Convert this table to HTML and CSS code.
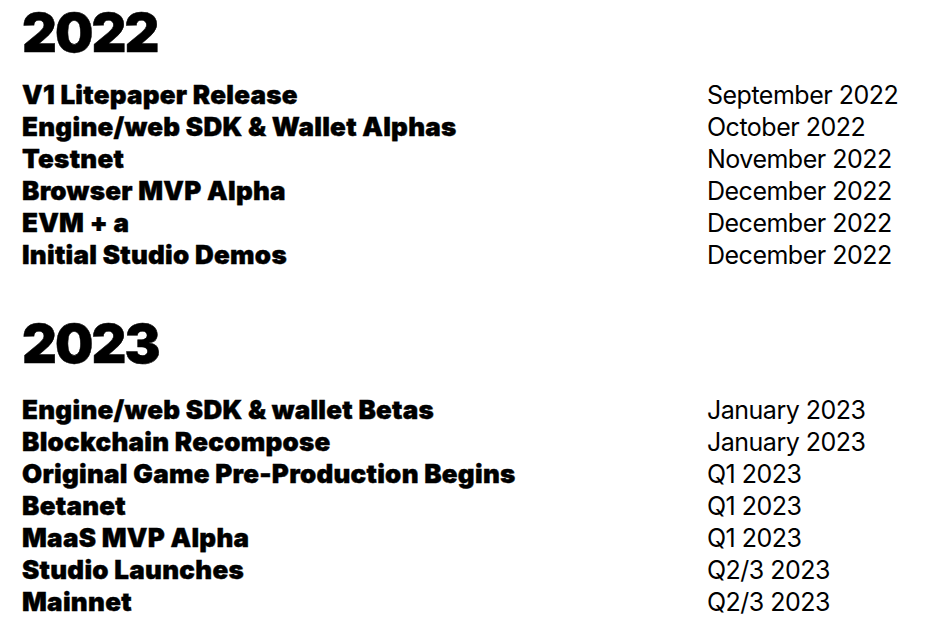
FILE: index.html
```html
<!DOCTYPE html>
<html lang="en">
<head>
<meta charset="utf-8">
<title>Roadmap</title>
<link rel="stylesheet" href="styles.css">
</head>
<body>
<main class="roadmap">
  <section class="year year-2022">
    <h2 class="year-title">2022</h2>
    <div class="rows">
      <div class="item">V1 Litepaper Release</div><div class="date">September 2022</div>
      <div class="item">Engine/web SDK &amp; Wallet Alphas</div><div class="date">October 2022</div>
      <div class="item">Testnet</div><div class="date">November 2022</div>
      <div class="item">Browser MVP Alpha</div><div class="date">December 2022</div>
      <div class="item">EVM + a</div><div class="date">December 2022</div>
      <div class="item">Initial Studio Demos</div><div class="date">December 2022</div>
    </div>
  </section>
  <section class="year year-2023">
    <h2 class="year-title">2023</h2>
    <div class="rows">
      <div class="item">Engine/web SDK &amp; wallet Betas</div><div class="date">January 2023</div>
      <div class="item">Blockchain Recompose</div><div class="date">January 2023</div>
      <div class="item">Original Game Pre-Production Begins</div><div class="date">Q1 2023</div>
      <div class="item">Betanet</div><div class="date">Q1 2023</div>
      <div class="item">MaaS MVP Alpha</div><div class="date">Q1 2023</div>
      <div class="item">Studio Launches</div><div class="date">Q2/3 2023</div>
      <div class="item">Mainnet</div><div class="date">Q2/3 2023</div>
    </div>
  </section>
</main>
</body>
</html>
```
FILE: styles.css
```css
html, body {
  margin: 0;
  padding: 0;
  background: #ffffff;
  color: #000000;
}
body {
  font-family: Inter, "Liberation Sans", sans-serif;
  width: 934px;
  height: 624px;
  overflow: hidden;
}
.roadmap {
  padding: 7px 0 0 22px;
  display: flex;
  flex-direction: column;
  gap: 47px;
}
.year {
  display: flex;
  flex-direction: column;
  gap: 20px;
}
.year-2023 {
  gap: 24px;
}
.year-title {
  margin: 0;
  font-size: 54px;
  line-height: 52px;
  font-weight: 900;
  letter-spacing: -0.035em;
  -webkit-text-stroke: 0.5px #000;
}
.rows {
  display: grid;
  grid-template-columns: 685px 1fr;
  grid-auto-rows: 32px;
  align-items: center;
}
.item {
  font-size: 26px;
  line-height: 32px;
  font-weight: 900;
  letter-spacing: 0.01em;
  white-space: nowrap;
  -webkit-text-stroke: 0.4px #000;
}
.date {
  font-size: 25px;
  line-height: 32px;
  font-weight: 400;
  letter-spacing: -0.02em;
  white-space: nowrap;
}
```
